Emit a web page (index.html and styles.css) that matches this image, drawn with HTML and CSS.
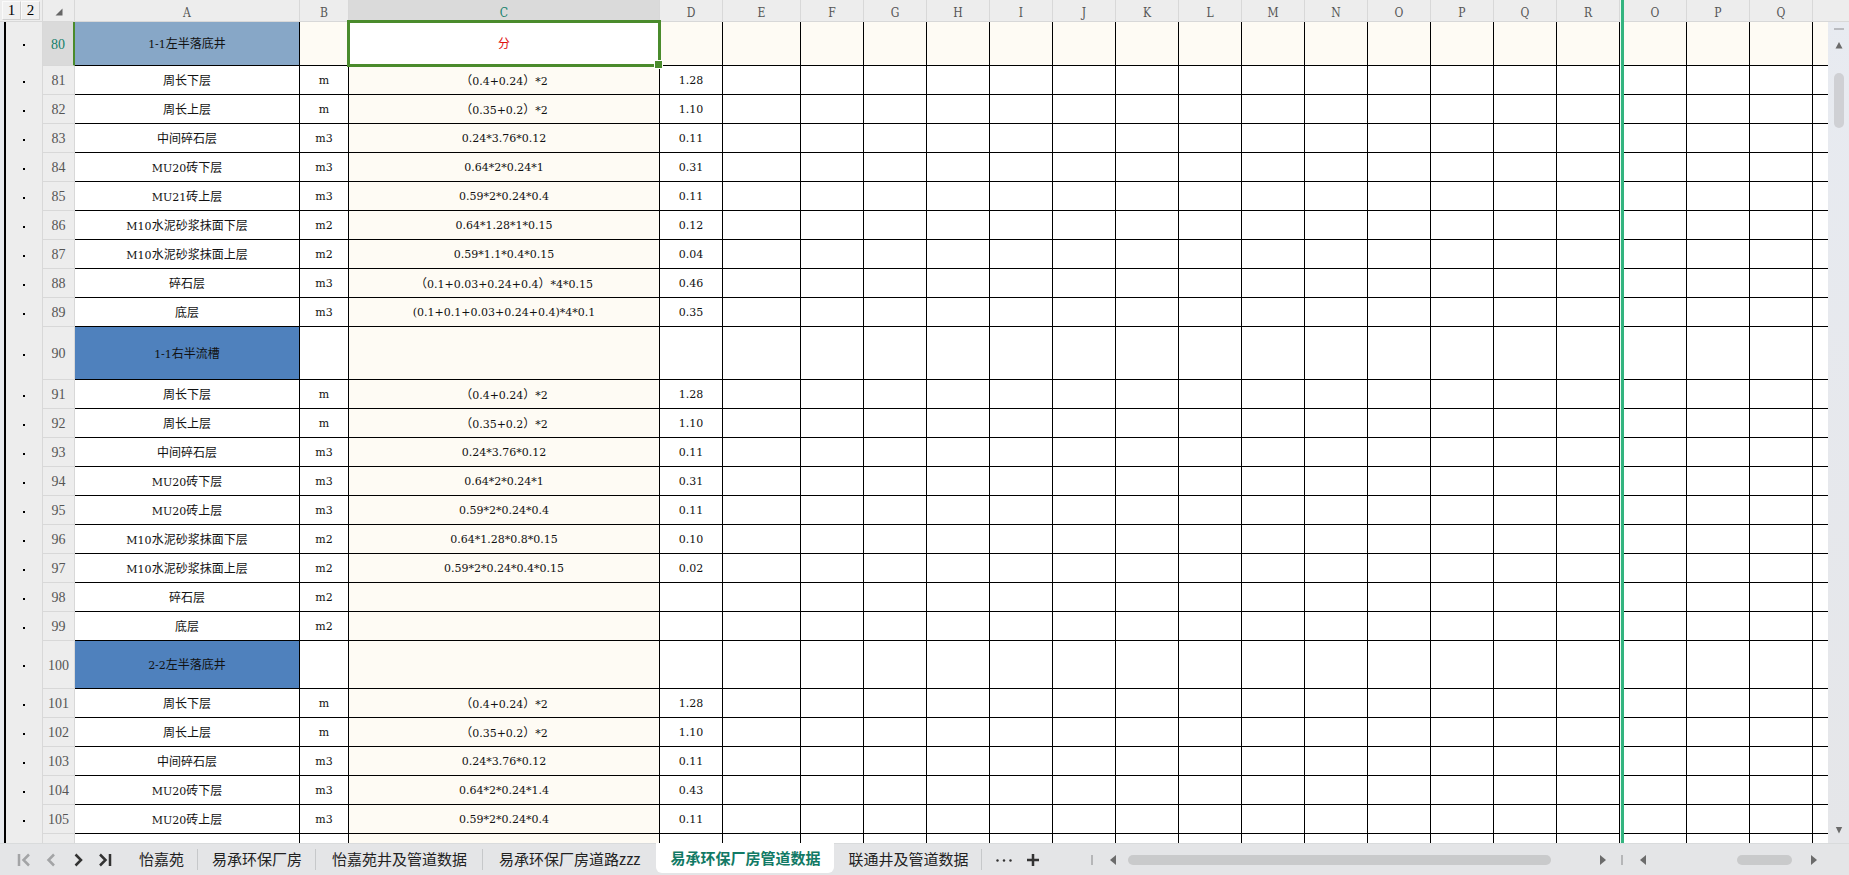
FILE: index.html
```html
<!DOCTYPE html>
<html lang="zh-CN">
<head>
<meta charset="utf-8">
<title>易承环保厂房管道数据</title>
<link rel="stylesheet" href="styles.css">
</head>
<body>
<main class="workspace">
  <div class="grid-pane">
    <table class="sheet">
      <colgroup id="cols"></colgroup>
      <thead><tr id="head"></tr></thead>
      <tbody id="rows"></tbody>
    </table>
  </div>
  <div class="vscroll">
    <div class="vscroll-corner"></div>
    <div class="split-handle"></div>
    <button class="arrow" aria-label="向上滚动"><svg width="8" height="8" viewBox="0 0 8 8"><path d="M4 1L7.5 7.5H.5Z"/></svg></button>
    <div class="vtrack"><div class="vthumb"></div></div>
    <button class="arrow" aria-label="向下滚动"><svg width="8" height="8" viewBox="0 0 8 8"><path d="M4 7.5L.8 1H7.2Z"/></svg></button>
  </div>
</main>
<footer class="bar">
  <nav class="sheet-nav">
    <button class="muted" aria-label="第一个"><svg width="14" height="14" viewBox="0 0 14 14"><path d="M2 1V13M12 1.500L6.500 7L12 12.500"/></svg></button>
    <button class="muted" aria-label="上一个"><svg width="14" height="14" viewBox="0 0 14 14"><path d="M10 1.500L4.500 7L10 12.500"/></svg></button>
    <button aria-label="下一个"><svg width="14" height="14" viewBox="0 0 14 14"><path d="M4.500 1.500L10 7L4.500 12.500"/></svg></button>
    <button aria-label="最后一个"><svg width="14" height="14" viewBox="0 0 14 14"><path d="M2 1.500L7.500 7L2 12.500M12 1V13"/></svg></button>
  </nav>
  <div class="tabs">
    <button class="tab">怡嘉苑</button>
    <button class="tab">易承环保厂房</button>
    <button class="tab wide">怡嘉苑井及管道数据</button>
    <button class="tab wide last">易承环保厂房道路zzz</button>
    <button class="tab active">易承环保厂房管道数据</button>
    <button class="tab">联通井及管道数据</button>
  </div>
  <button class="tool" aria-label="更多工作表"><svg width="18" height="14" viewBox="0 0 18 14"><g fill="#333"><circle cx="2.500" cy="7.500" r="1.200"/><circle cx="9" cy="7.500" r="1.200"/><circle cx="15.500" cy="7.500" r="1.200"/></g></svg></button>
  <button class="tool" aria-label="新建工作表"><svg width="14" height="14" viewBox="0 0 14 14"><path d="M7 1V13M1 7H13" stroke="#333" stroke-width="2.500"/></svg></button>
  <div class="hscroll main">
    <button class="arrow" aria-label="向左滚动"><svg width="8" height="10" viewBox="0 0 8 10"><path d="M1 5L7 0V10Z"/></svg></button>
    <div class="htrack"><div class="hthumb"></div></div>
    <button class="arrow" aria-label="向右滚动"><svg width="8" height="10" viewBox="0 0 8 10"><path d="M7 5L1 0V10Z"/></svg></button>
  </div>
  <div class="hscroll side">
    <button class="arrow" aria-label="向左滚动"><svg width="8" height="10" viewBox="0 0 8 10"><path d="M1 5L7 0V10Z"/></svg></button>
    <div class="htrack"><div class="hthumb"></div></div>
    <button class="arrow" aria-label="向右滚动"><svg width="8" height="10" viewBox="0 0 8 10"><path d="M7 5L1 0V10Z"/></svg></button>
  </div>
</footer>
<script src="sheet.js"></script>
</body>
</html>
```

FILE: styles.css
```css
* { box-sizing: border-box; }

body {
  margin: 0;
  height: 100vh;
  display: flex;
  flex-direction: column;
  overflow: hidden;
  background: #fff;
  font-family: "DejaVu Serif", "Noto Sans CJK SC", serif;
}

button {
  border: 0;
  padding: 0;
  background: none;
  color: inherit;
  font: inherit;
}

svg { display: block; }

.workspace { flex: 1; min-height: 0; display: flex; }
.grid-pane { flex: 1; min-width: 0; overflow: hidden; }

/* Sheet */
.sheet {
  width: 100%;
  table-layout: fixed;
  border-collapse: separate;
  border-spacing: 0;
  font-size: 11px;
  line-height: 16px;
  color: #111;
}

.sheet th, .sheet td {
  padding: 2px 0 0;
  overflow: hidden;
  white-space: nowrap;
  text-align: center;
  vertical-align: middle;
  font-weight: normal;
}

.sheet td { border-right: 1px solid #000; border-bottom: 1px solid #000; }
.sheet td:last-child { border-right: 0; }
.cjk { font-size: 12px; }

.col-gutter { width: 42px; }
.col-num { width: 33px; }
.col-a { width: 225px; }
.col-b { width: 49px; }
.col-c { width: 311px; }
.col-e { width: 78px; }
.col-std { width: 63px; }
.col-freeze { width: 4px; }

.sheet thead th {
  height: 22px;
  padding-top: 4px;
  background: #ededed;
  border-right: 1px solid #d8d8d8;
  border-bottom: 1px solid #d8d8d8;
  color: #555;
  font-family: "DejaVu Serif Condensed", "DejaVu Serif", serif;
  font-size: 12px;
  line-height: 16px;
}
.sheet thead th:last-child { border-right: 0; }
.sheet thead th.current { background: #dadada; color: #14806a; }

.sheet thead .levels { padding: 1px 2px; border-right: 0; }
.level-buttons { display: flex; }
.level-buttons button {
  width: 19px;
  height: 19px;
  background: #f0f0f0;
  border: 1px solid #fafafa;
  border-right-color: #cfcfcf;
  border-bottom-color: #cfcfcf;
  color: #000;
  font-family: "Liberation Serif", serif;
  font-size: 15px;
  line-height: 17px;
}

.sheet thead .corner { border-left: 1px solid #d8d8d8; padding-top: 2px; }
.corner svg { margin: 0 auto; }

.sheet .freeze, .sheet thead .freeze {
  border: 0;
  padding: 0;
  background: linear-gradient(to right, #eafaf3 1px, #33b47f 1px);
}

.row { height: 29px; }
.row.h44 { height: 44px; }
.row.h53 { height: 53px; }
.row.h48 { height: 48px; }

.sheet .num {
  background: #ededed;
  border-left: 1px solid #d8d8d8;
  border-right: 1px solid #d8d8d8;
  border-bottom: 1px solid #d8d8d8;
  color: #555;
  font-family: "Liberation Serif", serif;
  font-size: 14px;
}
.row.current .num { background: #dadada; color: #14806a; border-right: 2px solid #4a8b2c; }
.row.current td:not(.freeze), .sheet .c { background: #fefbf4; }
.sheet .title { background: #4f81bd; }
.sheet .row.current .title { background: #87a7c7; }

.sheet .row .gutter, .sheet .row.current .gutter:not(.freeze) {
  border: 0;
  background: linear-gradient(to right, #e7eaee 4px, #000 4px, #000 6px, #ededed 6px);
}
.dot { display: block; width: 2px; height: 2px; margin-left: 23px; background: #000; }

.sheet .row.current .selected {
  position: relative;
  overflow: visible;
  background: #fff;
  color: #e01010;
}
.selection {
  position: absolute;
  inset: -2px;
  border: 3px solid #4a8b2c;
}
.selection::after {
  content: "";
  position: absolute;
  right: -5px;
  bottom: -5px;
  width: 7px;
  height: 7px;
  background: #4a8b2c;
  border: 1px solid #fff;
}

/* Vertical scroll bar */
.vscroll {
  width: 21px;
  display: flex;
  flex-direction: column;
  align-items: center;
  padding-bottom: 9px;
  background: linear-gradient(#e8ebf1, #e5e6e9);
}
.vscroll-corner { align-self: stretch; height: 22px; background: #ededed; border-bottom: 1px solid #d8d8d8; }
.split-handle { width: 10px; height: 2px; margin: 6px 0 11px; background: #b9bbc0; }
.arrow { display: block; }
.arrow svg { fill: #6b6b6b; }
.vtrack { flex: 1; padding-top: 24px; }
.vthumb { width: 10px; height: 55px; border-radius: 5px; background: #cfd0d4; }

/* Bottom bar */
.bar {
  height: 32px;
  display: flex;
  align-items: center;
  background: #e4e5e7;
  border-top: 1px solid #d9dbdc;
  font-family: "Noto Sans CJK SC", sans-serif;
  font-size: 15px;
  color: #222;
}
.sheet-nav { display: flex; gap: 13px; padding: 0 13px 0 17px; }
.sheet-nav svg { fill: none; stroke: #333; stroke-width: 2.5; }
.sheet-nav .muted svg { stroke: #a3a4a6; }

.tabs { display: flex; align-self: stretch; margin-top: -1px; }
.tab {
  position: relative;
  height: 30px;
  padding: 2px 14px 0;
  line-height: 28px;
  white-space: nowrap;
}
.tab.wide { padding: 2px 16px 0; }
.tab::after {
  content: "";
  position: absolute;
  right: 0;
  top: 6px;
  width: 1px;
  height: 21px;
  background: #c6c8ca;
}
.tab.last::after, .tab.active::after { display: none; }
.tab.active {
  padding-top: 0;
  background: #fff;
  border-radius: 0 0 6px 6px;
  color: #117a65;
  font-weight: bold;
}
.tool { margin-left: 13px; }

.hscroll { display: flex; align-items: center; border-left: 2px solid #b5b6b8; height: 10px; }
.hscroll.main { flex: 1; margin-left: 51px; padding: 0 14px 0 16px; }
.hscroll.side { width: 228px; padding: 0 31px 0 16px; }
.htrack { flex: 1; padding: 0 11px; }
.hthumb { height: 10px; border-radius: 5px; background: #c9cacb; }
.main .hthumb { width: 92%; }
.side .hthumb { width: 55px; margin-left: auto; }
.side .htrack { padding-right: 18px; }
```

FILE: sheet.js
```js
const LEFT = "ABCDEFGHIJKLMNOPQR".split("");
const RIGHT = ["O", "P", "Q", ""];

const DATA = [
  [80, "1-1左半落底井", "", "分", "", "h44"],
  [81, "周长下层", "m", "（0.4+0.24）*2", "1.28"],
  [82, "周长上层", "m", "（0.35+0.2）*2", "1.10"],
  [83, "中间碎石层", "m3", "0.24*3.76*0.12", "0.11"],
  [84, "MU20砖下层", "m3", "0.64*2*0.24*1", "0.31"],
  [85, "MU21砖上层", "m3", "0.59*2*0.24*0.4", "0.11"],
  [86, "M10水泥砂浆抹面下层", "m2", "0.64*1.28*1*0.15", "0.12"],
  [87, "M10水泥砂浆抹面上层", "m2", "0.59*1.1*0.4*0.15", "0.04"],
  [88, "碎石层", "m3", "（0.1+0.03+0.24+0.4）*4*0.15", "0.46"],
  [89, "底层", "m3", "(0.1+0.1+0.03+0.24+0.4)*4*0.1", "0.35"],
  [90, "1-1右半流槽", "", "", "", "h53"],
  [91, "周长下层", "m", "（0.4+0.24）*2", "1.28"],
  [92, "周长上层", "m", "（0.35+0.2）*2", "1.10"],
  [93, "中间碎石层", "m3", "0.24*3.76*0.12", "0.11"],
  [94, "MU20砖下层", "m3", "0.64*2*0.24*1", "0.31"],
  [95, "MU20砖上层", "m3", "0.59*2*0.24*0.4", "0.11"],
  [96, "M10水泥砂浆抹面下层", "m2", "0.64*1.28*0.8*0.15", "0.10"],
  [97, "M10水泥砂浆抹面上层", "m2", "0.59*2*0.24*0.4*0.15", "0.02"],
  [98, "碎石层", "m2", "", ""],
  [99, "底层", "m2", "", ""],
  [100, "2-2左半落底井", "", "", "", "h48"],
  [101, "周长下层", "m", "（0.4+0.24）*2", "1.28"],
  [102, "周长上层", "m", "（0.35+0.2）*2", "1.10"],
  [103, "中间碎石层", "m3", "0.24*3.76*0.12", "0.11"],
  [104, "MU20砖下层", "m3", "0.64*2*0.24*1.4", "0.43"],
  [105, "MU20砖上层", "m3", "0.59*2*0.24*0.4", "0.11"],
  ["", "", "", "", ""],
];

const special = { A: "col-a", B: "col-b", C: "col-c", E: "col-e" };
const col = (name) => `<col class="${name}">`;
document.getElementById("cols").innerHTML =
  col("col-gutter") + col("col-num") +
  LEFT.map((l) => col(special[l] || "col-std")).join("") +
  col("col-freeze") + col("col-std").repeat(3) + col("col-rest");

document.getElementById("head").innerHTML =
  `<th class="levels"><div class="level-buttons"><button>1</button><button>2</button></div></th>` +
  `<th class="corner"><svg width="8" height="8" viewBox="0 0 8 8"><path d="M7.500 .5V7.500H.5Z" fill="#666"/></svg></th>` +
  LEFT.map((l) => `<th scope="col"${l === "C" ? ' class="current"' : ""}>${l}</th>`).join("") +
  `<th class="freeze"></th>` +
  RIGHT.map((l) => `<th scope="col">${l}</th>`).join("");

// Chinese runs are set one step larger than Latin runs.
const mixed = (s) => s.replace(/[\u4e00-\u9fff（）]+/g, (run) => `<span class="cjk">${run}</span>`);

document.getElementById("rows").innerHTML = DATA.map(([n, a, b, c, d, tall]) => {
  const current = n === 80;
  return `<tr class="row ${tall || ""} ${current ? "current" : ""}">` +
    `<td class="gutter">${n ? '<span class="dot"></span>' : ""}</td>` +
    `<th scope="row" class="num">${n}</th>` +
    `<td${tall ? ' class="title"' : ""}>${mixed(a)}</td>` +
    `<td>${b}</td>` +
    `<td class="c${current ? " selected" : ""}">${mixed(c)}${current ? '<div class="selection"></div>' : ""}</td>` +
    `<td>${d}</td>` +
    "<td></td>".repeat(LEFT.length - 4) +
    `<td class="freeze"></td>` +
    "<td></td>".repeat(RIGHT.length) +
    `</tr>`;
}).join("");
```
